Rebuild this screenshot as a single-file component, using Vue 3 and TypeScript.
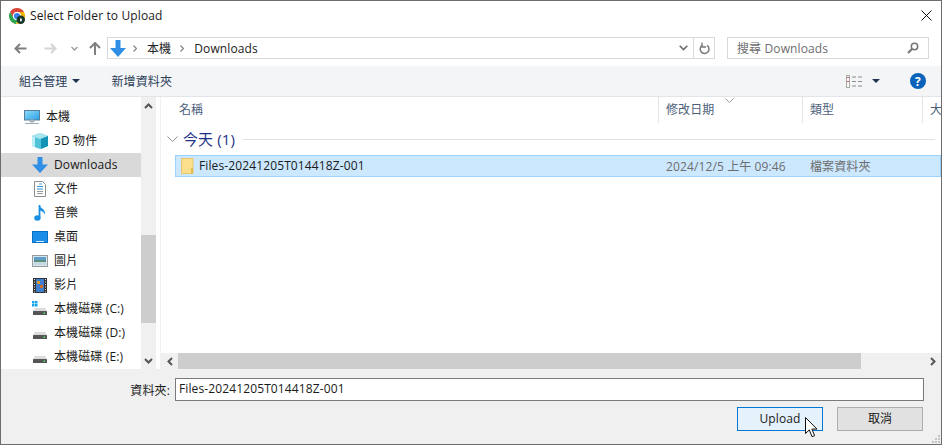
<script setup lang="ts">
interface NavItem { label: string; icon: string; indent: boolean; active?: boolean }
const navItems: NavItem[] = [
  { label: '本機', icon: 'pc', indent: false },
  { label: '3D 物件', icon: 'cube', indent: true },
  { label: 'Downloads', icon: 'down', indent: true, active: true },
  { label: '文件', icon: 'doc', indent: true },
  { label: '音樂', icon: 'music', indent: true },
  { label: '桌面', icon: 'desk', indent: true },
  { label: '圖片', icon: 'pic', indent: true },
  { label: '影片', icon: 'film', indent: true },
  { label: '本機磁碟 (C:)', icon: 'sys', indent: true },
  { label: '本機磁碟 (D:)', icon: 'disk', indent: true },
  { label: '本機磁碟 (E:)', icon: 'disk', indent: true },
]
</script>

<template>
  <div class="win">
    <header class="title">
      <svg class="logo" width="16" height="16" viewBox="0 0 16 16">
        <path d="M8 0A8 8 0 0 1 14.930 4H8A4 4 0 0 0 4.540 10L1.070 4A8 8 0 0 1 8 0z" fill="#db4437" />
        <path d="M1.070 4 4.540 10A4 4 0 0 0 9 11.870L6.900 15.930A8 8 0 0 1 1.070 4z" fill="#2da44e" />
        <path d="M8 4H14.930A8 8 0 0 1 6.900 15.930L11.460 10A4 4 0 0 0 8 4z" fill="#f4b400" />
        <circle cx="8" cy="8" r="3.900" fill="#fff" />
        <circle cx="8" cy="8" r="3.100" fill="#3b82e8" />
        <circle cx="11.800" cy="11.800" r="4.200" fill="#17352a" />
        <rect x="11" y="10.500" width="1.800" height="2.800" fill="#f2f2f2" />
      </svg>
      <span class="title-text">Select Folder to Upload</span>
      <svg class="close" width="11" height="11" viewBox="0 0 11 11">
        <path d="M.5.5l10 10M10.500.5l-10 10" stroke="#111" stroke-width="1" fill="none" />
      </svg>
    </header>

    <div class="navbar">
      <svg class="nav-ic" width="13" height="11" viewBox="0 0 13 11"><path d="M6 1 1.500 5.500 6 10M1.500 5.500H12.500" stroke="#7f7f7f" stroke-width="2" fill="none" /></svg>
      <svg class="nav-ic fwd" width="13" height="11" viewBox="0 0 13 11"><path d="M7 1l4.500 4.500L7 10M11.500 5.500H.5" stroke="#d4d4d4" stroke-width="2" fill="none" /></svg>
      <svg class="nav-ic hist" width="7" height="5" viewBox="0 0 7 5"><path d="M.5 1l3 3 3-3" stroke="#9a9a9a" stroke-width="1.300" fill="none" /></svg>
      <svg class="nav-ic up" width="12" height="13" viewBox="0 0 12 13"><path d="M1 6l5-5 5 5M6 1v12" stroke="#7f7f7f" stroke-width="2" fill="none" /></svg>
      <div class="address">
        <svg class="addr-ic" width="16" height="17" viewBox="0 0 16 17"><path d="M5.500 0h5v8H16l-8 9-8-9h5.500z" fill="#2f8fe6" /></svg>
        <svg class="crumb-sep first" width="4" height="7" viewBox="0 0 4 7"><path d="M.5.500l3 3-3 3" stroke="#808080" stroke-width="1.200" fill="none" /></svg>
        <span class="crumb">本機</span>
        <svg class="crumb-sep" width="4" height="7" viewBox="0 0 4 7"><path d="M.5.500l3 3-3 3" stroke="#808080" stroke-width="1.200" fill="none" /></svg>
        <span class="crumb">Downloads</span>
        <span class="addr-fill"></span>
        <svg class="addr-drop" width="9" height="6" viewBox="0 0 9 6"><path d="M.7.8l3.800 3.800L8.300.8" stroke="#6d6d6d" stroke-width="1.600" fill="none" /></svg>
        <span class="refresh">
          <svg width="11" height="13" viewBox="0 0 11 13"><path d="M3.500 3.200A4.400 4.400 0 1 0 8 3.400" stroke="#777" stroke-width="1.500" fill="none" /><path d="M3 0.500v4.500h4" stroke="#777" stroke-width="1.300" fill="none" /></svg>
        </span>
      </div>
      <div class="search">
        <span class="search-text">搜尋 Downloads</span>
        <svg width="12" height="12" viewBox="0 0 12 12"><circle cx="7.500" cy="4.500" r="3.200" stroke="#777" stroke-width="1.500" fill="none" /><path d="M5 7 1 11" stroke="#777" stroke-width="2.200" /></svg>
      </div>
    </div>

    <div class="toolbar">
      <span class="tool">組合管理</span>
      <span class="caret"></span>
      <span class="tool new">新增資料夾</span>
      <span class="tool-fill"></span>
      <svg width="16" height="13" viewBox="0 0 16 13">
        <rect x=".5" y=".5" width="3" height="12" fill="#fff" stroke="#a8a8a8" />
        <path d="M1 2.500h2M1 6.500h2" stroke="#c55" stroke-width="1" />
        <path d="M6 2h4M6 6.500h4M6 11h4M12 2h4M12 6.500h4M12 11h4" stroke="#8a8a8a" stroke-width="1" />
      </svg>
      <span class="caret view"></span>
      <svg class="help" width="16" height="16" viewBox="0 0 16 16"><circle cx="8" cy="8" r="8" fill="#0a63ba" /><text x="8" y="12.500" text-anchor="middle" class="help-q">?</text></svg>
    </div>

    <main class="body">
      <nav class="tree">
        <div v-for="item in navItems" :key="item.label" class="tree-row" :class="{ active: item.active, indent: item.indent }">
          <span class="tree-ic">
            <svg v-if="item.icon === 'pc'" width="16" height="16" viewBox="0 0 16 16"><defs><linearGradient id="scr" x1="0" y1="0" x2="1" y2="1"><stop offset="0" stop-color="#8fdcfb" /><stop offset="1" stop-color="#2a9fe6" /></linearGradient></defs><rect x=".5" y="1.500" width="15" height="9.500" fill="url(#scr)" stroke="#5b7d98" /><path d="M6 11h4v2H6zM1 14.500h14" fill="#b5c0ca" stroke="#9eacb8" /></svg>
            <svg v-else-if="item.icon === 'cube'" width="16" height="16" viewBox="0 0 16 16"><path d="M8 0l8 3v10l-8 3-8-3V3z" fill="#4fc3d9" /><path d="M0 3l8 3 8-3-8-3z" fill="#a8e6ef" /><path d="M9 6v10l7-3V3z" fill="#1593b5" /><path d="M0 3v10l3 1.300V4.300z" fill="#bdeef5" /></svg>
            <svg v-else-if="item.icon === 'down'" width="16" height="16" viewBox="0 0 16 16"><path d="M5.500 0h5v7.500H16L8 16 0 7.500h5.500z" fill="#2f8fe6" /></svg>
            <svg v-else-if="item.icon === 'doc'" width="12" height="16" viewBox="0 0 12 16"><path d="M.5.500h8l3 3v12H.5z" fill="#fff" stroke="#8e8e8e" /><path d="M5 3h3" stroke="#4a9fd8" /><path d="M3 5.500h6M3 8h6" stroke="#2f8fd0" /><path d="M3 10.500h6M3 12.500h6" stroke="#9a9a9a" /></svg>
            <svg v-else-if="item.icon === 'music'" width="12" height="16" viewBox="0 0 12 16"><path d="M5.500 0v13" stroke="#1a8fe3" stroke-width="1.800" /><ellipse cx="3.400" cy="13" rx="3.200" ry="2.700" fill="#1a8fe3" /><path d="M5.500 0c.5 3.500 6.500 4 5.500 9.500-1-2.500-3-3.500-5.500-4z" fill="#1a8fe3" /></svg>
            <svg v-else-if="item.icon === 'desk'" width="16" height="12" viewBox="0 0 16 12"><rect x=".5" y=".5" width="15" height="11" fill="#1c8ee8" stroke="#0a6fbe" /><rect x="4" y="10" width="8" height="1" fill="#d5ecfb" /></svg>
            <svg v-else-if="item.icon === 'pic'" width="16" height="12" viewBox="0 0 16 12"><rect x=".5" y=".5" width="15" height="11" fill="#d5e8f3" stroke="#9a9a9a" /><path d="M2 2h12v3H2z" fill="#5f9bc8" /><path d="M2 5h12v2H2z" fill="#5d8e80" /><path d="M2 7h12v3H2z" fill="#c3dbe0" /></svg>
            <svg v-else-if="item.icon === 'film'" width="14" height="15" viewBox="0 0 14 15"><rect width="14" height="15" fill="#333" /><rect x="3" y="1" width="8" height="13" fill="#3f7ed0" /><rect x="4" y="3" width="3" height="3" fill="#d69a2d" /><rect x="7" y="7" width="3" height="3" fill="#c96b2a" /><path d="M1 1.500h1M1 4h1M1 6.500h1M1 9h1M1 11.500h1M1 14h1M12 1.500h1M12 4h1M12 6.500h1M12 9h1M12 11.500h1M12 14h1" stroke="#ddd" /></svg>
            <svg v-else width="16" height="16" viewBox="0 0 16 16">
              <g v-if="item.icon === 'sys'" fill="#14a5f0"><rect y="0" width="2.500" height="2.500" /><rect x="3" y="0" width="2.500" height="2.500" /><rect y="3" width="2.500" height="2.500" /><rect x="3" y="3" width="2.500" height="2.500" /></g>
              <path d="M3 7h10l2 3H1z" fill="#dcdcdc" /><rect x="1" y="10" width="14" height="4" rx=".5" fill="#555" /><rect x="11.500" y="11.500" width="1.500" height="1.500" fill="#4cd964" />
            </svg>
          </span>
          <span class="tree-label">{{ item.label }}</span>
        </div>
      </nav>

      <div class="vscroll">
        <span class="sb-btn"><svg width="9" height="6" viewBox="0 0 9 6"><path d="M1 5l3.500-3.500L8 5" stroke="#555" stroke-width="2" fill="none" /></svg></span>
        <span class="sb-track top"></span>
        <span class="sb-thumb"></span>
        <span class="sb-track"></span>
        <span class="sb-btn"><svg width="9" height="6" viewBox="0 0 9 6"><path d="M1 1l3.500 3.500L8 1" stroke="#555" stroke-width="2" fill="none" /></svg></span>
      </div>

      <section class="pane">
        <div class="heads">
          <span class="head">名稱</span>
          <span class="head sorted">修改日期<svg class="sort" width="9" height="5" viewBox="0 0 9 5"><path d="M.5.500l4 4 4-4" stroke="#9a9a9a" fill="none" /></svg></span>
          <span class="head">類型</span>
          <span class="head">大</span>
        </div>
        <div class="group">
          <svg width="11" height="7" viewBox="0 0 11 7"><path d="M.5.500l5 5 5-5" stroke="#8f8f8f" fill="none" /></svg>
          <span class="group-name">今天 (1)</span>
          <span class="group-line"></span>
        </div>
        <div class="row">
          <span class="cell-name">
            <svg width="13" height="16" viewBox="0 0 13 16"><path d="M.5.500h11.500v15H.5z" fill="#fcdf8c" stroke="#e6c66a" /><path d="M10 10h2v5.500h-2z" fill="#e9bb4e" /></svg>
            <span class="file">Files-20241205T014418Z-001</span>
          </span>
          <span class="cell-date">2024/12/5 上午 09:46</span>
          <span class="cell-type">檔案資料夾</span>
        </div>
        <div class="pane-fill"></div>
        <div class="hscroll">
          <span class="hb-btn"><svg width="6" height="9" viewBox="0 0 6 9"><path d="M5 1 1.500 4.500 5 8" stroke="#555" stroke-width="2" fill="none" /></svg></span>
          <span class="hb-thumb"></span>
          <span class="hb-track"></span>
          <span class="hb-btn"><svg width="6" height="9" viewBox="0 0 6 9"><path d="M1 1l3.500 3.500L1 8" stroke="#555" stroke-width="2" fill="none" /></svg></span>
        </div>
      </section>
    </main>

    <footer class="foot">
      <div class="foot-row">
        <label class="foot-label">資料夾:</label>
        <div class="input">Files-20241205T014418Z-001</div>
      </div>
      <div class="btns">
        <button class="btn primary">Upload</button>
        <button class="btn">取消</button>
      </div>
      <svg class="grip" width="10" height="10" viewBox="0 0 10 10"><path d="M7 1h2v2H7zM4 4h2v2H4zM7 4h2v2H7zM1 7h2v2H1zM4 7h2v2H4zM7 7h2v2H7z" fill="#c4c4c4" /></svg>
      <svg class="cursor" width="13" height="21" viewBox="0 0 13 21"><path d="M.5.500v16l3.800-3.600 2.700 6.800 2.600-1-2.700-6.600H12z" fill="#fff" stroke="#111" stroke-width="1" /></svg>
    </footer>
  </div>
</template>

<style>
html, body { margin: 0; background: #fff; }
</style>

<style scoped>
.win {
  width: 942px;
  height: 445px;
  box-sizing: border-box;
  border: 1px solid #6d6d6d;
  display: flex;
  flex-direction: column;
  overflow: hidden;
  background: #fff;
  font-family: "Open Sans", "Noto Sans CJK TC", sans-serif;
  font-size: 12px;
  letter-spacing: .12px;
  color: #1a1a1a;
}
.title {
  height: 29px;
  flex: none;
  display: flex;
  align-items: center;
  padding: 0 9px 0 8px;
}
.logo { flex: none; }
.title-text { margin-left: 5px; flex: 1; }
.navbar {
  height: 36px;
  flex: none;
  display: flex;
  align-items: center;
  padding-left: 13px;
  box-sizing: border-box;
}
.fwd { margin-left: 17px; }
.hist { margin-left: 14px; }
.up { margin-left: 11px; }
.address {
  margin-left: 6px;
  width: 608px;
  height: 22px;
  flex: none;
  box-sizing: border-box;
  border: 1px solid #d9d9d9;
  display: flex;
  align-items: center;
  padding-left: 2px;
}
.crumb-sep { margin: 0 10px 0 9px; flex: none; }
.crumb-sep.first { margin-left: 7px; }
.crumb { color: #222; }
.addr-fill { flex: 1; }
.addr-drop { margin-right: 5px; }
.refresh {
  width: 20px;
  height: 20px;
  border-left: 1px solid #d9d9d9;
  display: flex;
  align-items: center;
  justify-content: center;
}
.search {
  margin-left: 12px;
  width: 202px;
  height: 22px;
  flex: none;
  box-sizing: border-box;
  border: 1px solid #d9d9d9;
  display: flex;
  align-items: center;
  justify-content: space-between;
  padding: 0 9px;
  color: #6d6d6d;
}
.toolbar {
  height: 31px;
  flex: none;
  box-sizing: border-box;
  border-bottom: 1px solid #e3e5e8;
  background: #f4f5f7;
  display: flex;
  align-items: center;
  padding-left: 18px;
  padding-right: 15px;
}
.tool { color: #2b3d57; }
.new { margin-left: 31px; }
.tool-fill { flex: 1; }
.caret {
  width: 0;
  height: 0;
  border-left: 4px solid transparent;
  border-right: 4px solid transparent;
  border-top: 4px solid #1f3350;
  margin-left: 5px;
}
.view { margin: 0 30px 0 10px; }
.help-q { font: 700 12px "Open Sans", sans-serif; fill: #fff; }
.body {
  flex: 1;
  min-height: 0;
  display: flex;
}
.tree {
  width: 140px;
  flex: none;
  padding-top: 8px;
  overflow: hidden;
  box-sizing: border-box;
}
.tree-row {
  height: 24px;
  display: flex;
  align-items: center;
  padding-left: 23px;
  white-space: nowrap;
}
.tree-row.indent { padding-left: 31px; }
.tree-row.active { background: #d9d9d9; }
.tree-ic {
  width: 16px;
  height: 16px;
  flex: none;
  display: flex;
  align-items: center;
  justify-content: center;
}
.tree-label { margin-left: 6px; margin-bottom: 2px; }
.vscroll {
  width: 15px;
  flex: none;
  display: flex;
  flex-direction: column;
  background: #f0f0f0;
}
.sb-btn {
  height: 17px;
  flex: none;
  display: flex;
  align-items: center;
  justify-content: center;
}
.sb-track { flex: 1; }
.sb-track.top { flex: none; height: 121px; }
.sb-thumb { height: 88px; flex: none; background: #cdcdcd; }
.pane {
  flex: 1;
  min-width: 0;
  margin-left: 4px;
  border-left: 1px solid #f0f0f0;
  display: flex;
  flex-direction: column;
  position: relative;
}
.heads {
  height: 26px;
  flex: none;
  display: grid;
  grid-template-columns: 498px 144px 120px 20px;
  overflow: hidden;
}
.head {
  padding-left: 7px;
  margin-left: -1px;
  border-left: 1px solid #e5e5e5;
  color: #4c607a;
  line-height: 26px;
  position: relative;
  white-space: nowrap;
}
.head:first-child { border-left: 0; padding-left: 18px; margin-left: 0; }
.sort { position: absolute; left: 66px; top: 1px; }
.group {
  height: 32px;
  flex: none;
  display: flex;
  align-items: center;
  padding-left: 6px;
  padding-right: 6px;
}
.group-name { margin-left: 5px; margin-bottom: 2px; font-size: 15px; color: #1e3287; }
.group-line { flex: 1; height: 1px; margin-left: 8px; background: #e2e2e2; }
.row {
  height: 22px;
  flex: none;
  margin-left: 14px;
  box-sizing: border-box;
  border: 1px solid #99d1ff;
  background: #cce8ff;
  display: grid;
  grid-template-columns: 490px 144px 1fr;
  align-items: center;
  white-space: nowrap;
  padding-bottom: 1px;
}
.cell-name { display: flex; align-items: center; padding-left: 5px; }
.file { margin-left: 5px; color: #1a1a1a; }
.cell-date, .cell-type { color: #6d6d6d; }
.pane-fill { flex: 1; }
.hscroll {
  height: 16px;
  flex: none;
  display: flex;
  background: #f0f0f0;
}
.hb-btn {
  width: 17px;
  flex: none;
  display: flex;
  align-items: center;
  justify-content: center;
}
.hb-thumb { width: 683px; flex: none; background: #cdcdcd; }
.hb-track { flex: 1; }
.foot {
  height: 75px;
  flex: none;
  background: #f0f0f0;
  position: relative;
  box-sizing: border-box;
  padding-top: 9px;
}
.foot-row { display: flex; align-items: center; }
.foot-label { width: 169px; text-align: right; }
.input {
  margin-left: 5px;
  width: 749px;
  height: 23px;
  box-sizing: border-box;
  border: 1px solid #7a7a7a;
  background: #fff;
  line-height: 20px;
  padding-left: 3px;
}
.btns {
  margin-top: 6px;
  display: flex;
  justify-content: flex-end;
  gap: 14px;
  padding-right: 18px;
}
.btn {
  width: 86px;
  height: 24px;
  padding: 0 0 2px;
  box-sizing: border-box;
  border: 1px solid #adadad;
  background: #e1e1e1;
  color: #1a1a1a;
  font: inherit;
  letter-spacing: inherit;
}
.btn.primary { border-color: #0078d7; background: #e5f1fb; }
.grip { position: absolute; right: 0; bottom: 0; }
.cursor { position: absolute; left: 804px; top: 48px; }
</style>
